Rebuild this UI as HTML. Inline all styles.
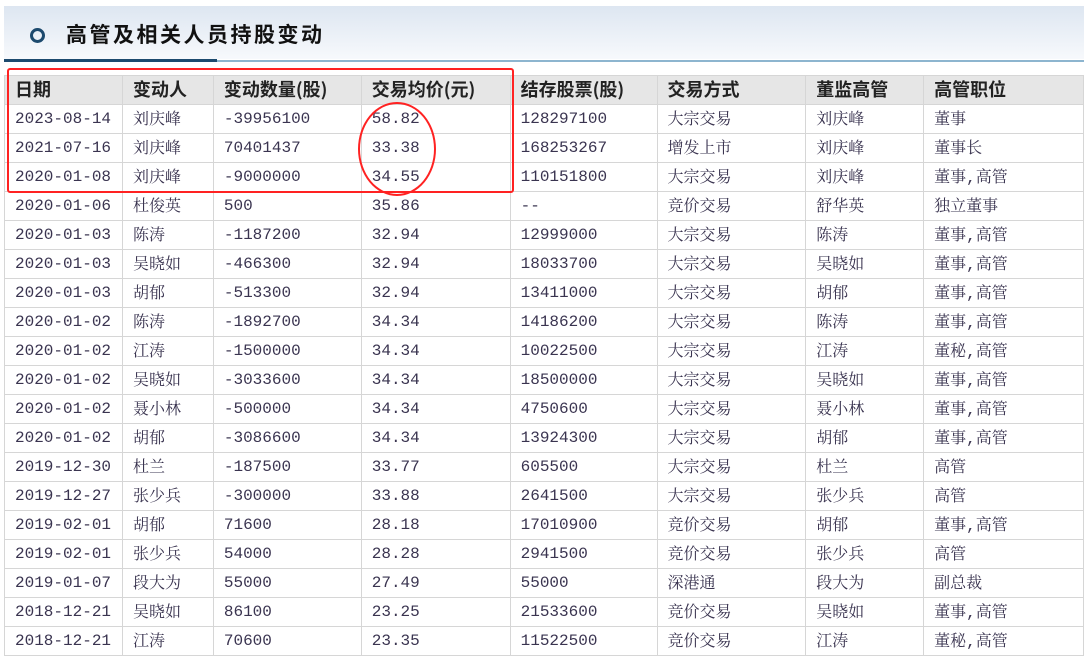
<!DOCTYPE html>
<html><head><meta charset="utf-8"><style>
body{margin:0;background:#fff;width:1084px;height:656px;overflow:hidden;position:relative;font-family:"Liberation Mono","Noto Serif CJK SC",serif;}
.hd{position:absolute;left:4px;top:6px;width:1080px;height:53px;background:linear-gradient(#dde6f1,#f7f9fc);}
.ln1{position:absolute;left:4px;top:59px;width:213px;height:3px;background:#1d4a6e;}
.ln2{position:absolute;left:217px;top:60px;width:867px;height:2px;background:#8db5cf;}
.ci{position:absolute;left:30px;top:28px;width:9px;height:9px;border:3px solid #1d4a6e;border-radius:50%;}
.tt{position:absolute;left:66px;top:19px;font:bold 21px "Noto Sans CJK SC",sans-serif;color:#111;letter-spacing:2.5px;}
table{position:absolute;left:4px;top:75px;border-collapse:collapse;table-layout:fixed;font-size:16px;color:#3a3450;}
td,th{border:1px solid #d6d6d6;height:28px;padding:0 0 0 10px;text-align:left;white-space:nowrap;overflow:hidden;box-sizing:border-box;}
td:nth-child(2),td:nth-child(6),td:nth-child(7),td:nth-child(8){padding-bottom:4px;}
th{background:#e6e6e6;color:#222;font-weight:bold;font-family:"Noto Sans CJK SC",sans-serif;font-size:18px;padding-bottom:2px;}
tr{height:29px;}
.rr{position:absolute;left:7px;top:68px;width:503px;height:121px;border:2px solid #f22;border-radius:3px;}
.el{position:absolute;left:358px;top:102px;width:74px;height:90px;border:2px solid #f22;border-radius:50%;}
</style></head><body>
<div class="hd"></div><div class="ln1"></div><div class="ln2"></div>
<div class="ci"></div><div class="tt">高管及相关人员持股变动</div>
<table>
<colgroup><col style="width:118px"><col style="width:91px"><col style="width:148px"><col style="width:149px"><col style="width:147px"><col style="width:149px"><col style="width:118px"><col style="width:160px"></colgroup>
<tr><th>日期</th><th>变动人</th><th>变动数量(股)</th><th>交易均价(元)</th><th>结存股票(股)</th><th>交易方式</th><th>董监高管</th><th>高管职位</th></tr>
<tr><td>2023-08-14</td><td>刘庆峰</td><td>-39956100</td><td>58.82</td><td>128297100</td><td>大宗交易</td><td>刘庆峰</td><td>董事</td></tr>
<tr><td>2021-07-16</td><td>刘庆峰</td><td>70401437</td><td>33.38</td><td>168253267</td><td>增发上市</td><td>刘庆峰</td><td>董事长</td></tr>
<tr><td>2020-01-08</td><td>刘庆峰</td><td>-9000000</td><td>34.55</td><td>110151800</td><td>大宗交易</td><td>刘庆峰</td><td>董事,高管</td></tr>
<tr><td>2020-01-06</td><td>杜俊英</td><td>500</td><td>35.86</td><td>--</td><td>竞价交易</td><td>舒华英</td><td>独立董事</td></tr>
<tr><td>2020-01-03</td><td>陈涛</td><td>-1187200</td><td>32.94</td><td>12999000</td><td>大宗交易</td><td>陈涛</td><td>董事,高管</td></tr>
<tr><td>2020-01-03</td><td>吴晓如</td><td>-466300</td><td>32.94</td><td>18033700</td><td>大宗交易</td><td>吴晓如</td><td>董事,高管</td></tr>
<tr><td>2020-01-03</td><td>胡郁</td><td>-513300</td><td>32.94</td><td>13411000</td><td>大宗交易</td><td>胡郁</td><td>董事,高管</td></tr>
<tr><td>2020-01-02</td><td>陈涛</td><td>-1892700</td><td>34.34</td><td>14186200</td><td>大宗交易</td><td>陈涛</td><td>董事,高管</td></tr>
<tr><td>2020-01-02</td><td>江涛</td><td>-1500000</td><td>34.34</td><td>10022500</td><td>大宗交易</td><td>江涛</td><td>董秘,高管</td></tr>
<tr><td>2020-01-02</td><td>吴晓如</td><td>-3033600</td><td>34.34</td><td>18500000</td><td>大宗交易</td><td>吴晓如</td><td>董事,高管</td></tr>
<tr><td>2020-01-02</td><td>聂小林</td><td>-500000</td><td>34.34</td><td>4750600</td><td>大宗交易</td><td>聂小林</td><td>董事,高管</td></tr>
<tr><td>2020-01-02</td><td>胡郁</td><td>-3086600</td><td>34.34</td><td>13924300</td><td>大宗交易</td><td>胡郁</td><td>董事,高管</td></tr>
<tr><td>2019-12-30</td><td>杜兰</td><td>-187500</td><td>33.77</td><td>605500</td><td>大宗交易</td><td>杜兰</td><td>高管</td></tr>
<tr><td>2019-12-27</td><td>张少兵</td><td>-300000</td><td>33.88</td><td>2641500</td><td>大宗交易</td><td>张少兵</td><td>高管</td></tr>
<tr><td>2019-02-01</td><td>胡郁</td><td>71600</td><td>28.18</td><td>17010900</td><td>竞价交易</td><td>胡郁</td><td>董事,高管</td></tr>
<tr><td>2019-02-01</td><td>张少兵</td><td>54000</td><td>28.28</td><td>2941500</td><td>竞价交易</td><td>张少兵</td><td>高管</td></tr>
<tr><td>2019-01-07</td><td>段大为</td><td>55000</td><td>27.49</td><td>55000</td><td>深港通</td><td>段大为</td><td>副总裁</td></tr>
<tr><td>2018-12-21</td><td>吴晓如</td><td>86100</td><td>23.25</td><td>21533600</td><td>竞价交易</td><td>吴晓如</td><td>董事,高管</td></tr>
<tr><td>2018-12-21</td><td>江涛</td><td>70600</td><td>23.35</td><td>11522500</td><td>竞价交易</td><td>江涛</td><td>董秘,高管</td></tr>
</table>
<div class="rr"></div><div class="el"></div>
</body></html>
